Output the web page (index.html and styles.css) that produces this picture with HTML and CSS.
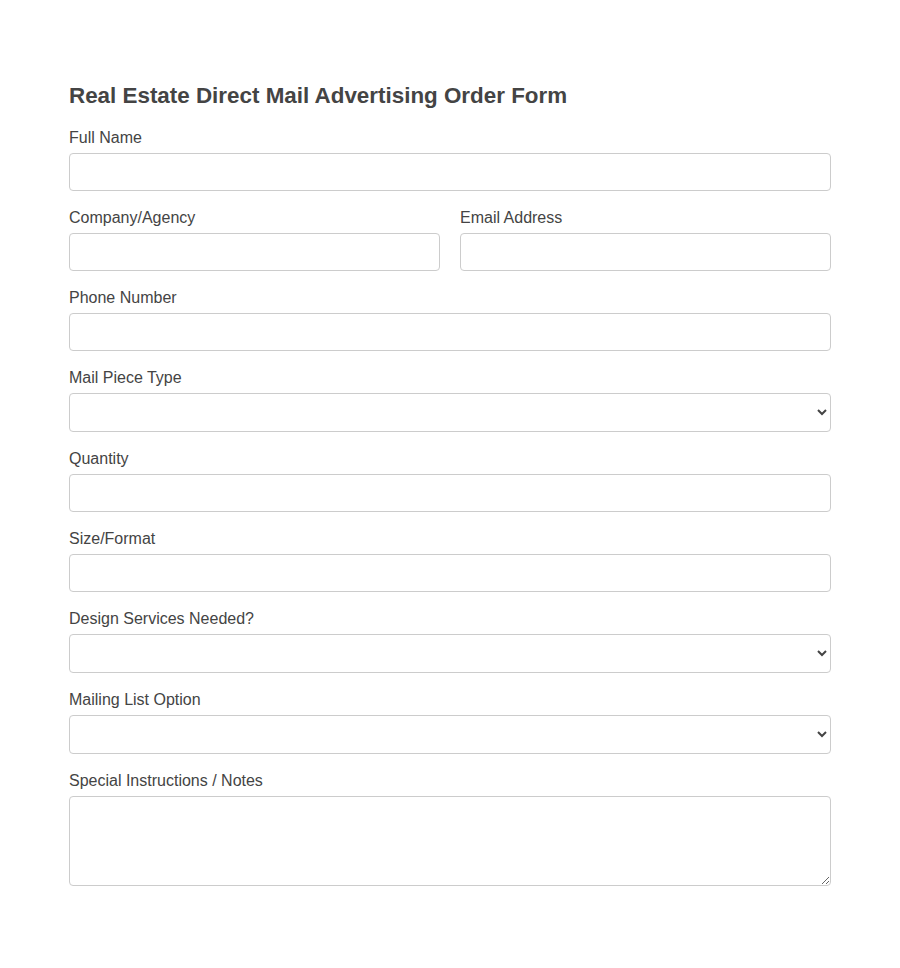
FILE: index.html
```html
<!DOCTYPE html>
<html lang="en">
<head>
<meta charset="utf-8">
<title>Real Estate Direct Mail Advertising Order Form</title>
<link rel="stylesheet" href="styles.css">
</head>
<body>
<form class="form">
  <h2 class="title">Real Estate Direct Mail Advertising Order Form</h2>
  <div class="group">
    <label class="label" for="name">Full Name</label>
    <input class="control" id="name" type="text">
  </div>
  <div class="row">
    <div class="group">
      <label class="label" for="company">Company/Agency</label>
      <input class="control" id="company" type="text">
    </div>
    <div class="group">
      <label class="label" for="email">Email Address</label>
      <input class="control" id="email" type="email">
    </div>
  </div>
  <div class="group">
    <label class="label" for="phone">Phone Number</label>
    <input class="control" id="phone" type="tel">
  </div>
  <div class="group">
    <label class="label" for="type">Mail Piece Type</label>
    <select class="control select" id="type"><option></option></select>
  </div>
  <div class="group">
    <label class="label" for="qty">Quantity</label>
    <input class="control" id="qty" type="text">
  </div>
  <div class="group">
    <label class="label" for="size">Size/Format</label>
    <input class="control" id="size" type="text">
  </div>
  <div class="group">
    <label class="label" for="design">Design Services Needed?</label>
    <select class="control select" id="design"><option></option></select>
  </div>
  <div class="group">
    <label class="label" for="list">Mailing List Option</label>
    <select class="control select" id="list"><option></option></select>
  </div>
  <div class="group">
    <label class="label" for="notes">Special Instructions / Notes</label>
    <textarea class="control textarea" id="notes"></textarea>
  </div>
</form>
</body>
</html>
```
FILE: styles.css
```css
html, body {
  margin: 0;
  padding: 0;
  background: #fff;
}
body {
  font-family: "Liberation Sans", Arial, sans-serif;
  color: #444;
}
.form {
  width: 762px;
  margin: 0 auto;
  padding-top: 83px;
}
.title {
  margin: 0 0 20px;
  font-size: 22.4px;
  line-height: 25px;
  font-weight: bold;
  color: #444;
}
.group {
  margin-bottom: 17px;
}
.row {
  display: grid;
  grid-template-columns: 1fr 1fr;
  column-gap: 20px;
}
.label {
  display: block;
  font-size: 16px;
  line-height: 20px;
  margin-bottom: 5px;
  color: #444;
}
.control {
  display: block;
  box-sizing: border-box;
  width: 100%;
  height: 38px;
  margin: 0;
  padding: 8px 10px;
  border: 1px solid #ccc;
  border-radius: 4px;
  background: #fff;
  font-family: "Liberation Sans", Arial, sans-serif;
  font-size: 16px;
  color: #444;
}
.select {
  height: 39px;
  padding: 8px 6px;
}
.textarea {
  height: 90px;
  resize: vertical;
}
```
